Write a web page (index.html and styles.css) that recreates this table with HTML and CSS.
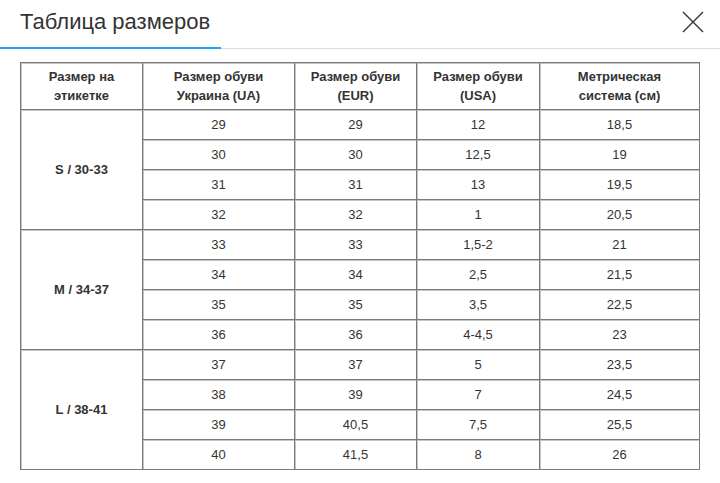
FILE: index.html
```html
<!DOCTYPE html>
<html lang="ru">
<head>
<meta charset="utf-8">
<title>Таблица размеров</title>
<link rel="stylesheet" href="styles.css">
</head>
<body>
<div class="modal">
  <div class="head">
    <h1 class="title">Таблица размеров</h1>
    <button class="close" aria-label="Закрыть">
      <svg width="22" height="22" viewBox="0 0 22 22"><path d="M1 1L21 21M21 1L1 21" stroke="#333" stroke-width="1.4" fill="none"/></svg>
    </button>
  </div>
  <div class="tabs"><span class="tab-active"></span></div>
  <div class="body">
    <table class="sizes">
      <colgroup>
        <col class="c1"><col class="c2"><col class="c3"><col class="c4"><col class="c5">
      </colgroup>
      <thead>
        <tr>
          <th>Размер на<br>этикетке</th>
          <th>Размер обуви<br>Украина (UA)</th>
          <th>Размер обуви<br>(EUR)</th>
          <th>Размер обуви<br>(USA)</th>
          <th>Метрическая<br>система (см)</th>
        </tr>
      </thead>
      <tbody>
        <tr><td class="grp" rowspan="4">S / 30-33</td><td>29</td><td>29</td><td>12</td><td>18,5</td></tr>
        <tr><td>30</td><td>30</td><td>12,5</td><td>19</td></tr>
        <tr><td>31</td><td>31</td><td>13</td><td>19,5</td></tr>
        <tr><td>32</td><td>32</td><td>1</td><td>20,5</td></tr>
        <tr><td class="grp" rowspan="4">M / 34-37</td><td>33</td><td>33</td><td>1,5-2</td><td>21</td></tr>
        <tr><td>34</td><td>34</td><td>2,5</td><td>21,5</td></tr>
        <tr><td>35</td><td>35</td><td>3,5</td><td>22,5</td></tr>
        <tr><td>36</td><td>36</td><td>4-4,5</td><td>23</td></tr>
        <tr><td class="grp" rowspan="4">L / 38-41</td><td>37</td><td>37</td><td>5</td><td>23,5</td></tr>
        <tr><td>38</td><td>39</td><td>7</td><td>24,5</td></tr>
        <tr><td>39</td><td>40,5</td><td>7,5</td><td>25,5</td></tr>
        <tr><td>40</td><td>41,5</td><td>8</td><td>26</td></tr>
      </tbody>
    </table>
  </div>
</div>
</body>
</html>
```
FILE: styles.css
```css
* { box-sizing: border-box; }
html, body { margin: 0; padding: 0; background: #fff; }
body { font-family: "Liberation Sans", Arial, sans-serif; color: #333; }
.modal { width: 720px; height: 483px; overflow: hidden; }
.head {
  height: 47px;
  display: flex;
  align-items: center;
  justify-content: space-between;
  padding: 0 16px 0 20px;
}
.title {
  margin: 0;
  font-weight: normal;
  font-size: 22px;
  color: #333;
  line-height: 26px;
  padding-bottom: 3px;
}
.close {
  border: 0;
  background: none;
  padding: 0;
  width: 22px;
  height: 22px;
  margin-bottom: 4px;
  cursor: pointer;
}
.close svg { display: block; }
.tabs {
  height: 2px;
  border-bottom: 1px solid #ddd;
}
.tab-active {
  display: block;
  width: 221px;
  height: 2px;
  background: #1ea5f2;
}
.body { padding: 13px 21px 0 20px; }
.sizes {
  width: 679px;
  border-collapse: separate;
  border-spacing: 0;
  table-layout: fixed;
  border-left: 1px solid #7a7a7a;
  border-top: 1px solid #7a7a7a;
  font-size: 13px;
}
.c1 { width: 122px; }
.c2 { width: 152px; }
.c3 { width: 122px; }
.c4 { width: 123px; }
.c5 { width: 160px; }
.sizes th, .sizes td {
  border-right: 1px solid #7a7a7a;
  border-bottom: 1px solid #7a7a7a;
  box-shadow: inset 1px 1px 0 #c4c4c4;
  text-align: center;
  padding: 0;
  color: #333;
}
.sizes th {
  height: 47px;
  font-weight: bold;
  font-size: 13px;
  line-height: 19px;
}
.sizes td {
  height: 30px;
  font-size: 13px;
}
.sizes td.grp { font-weight: bold; }
```
